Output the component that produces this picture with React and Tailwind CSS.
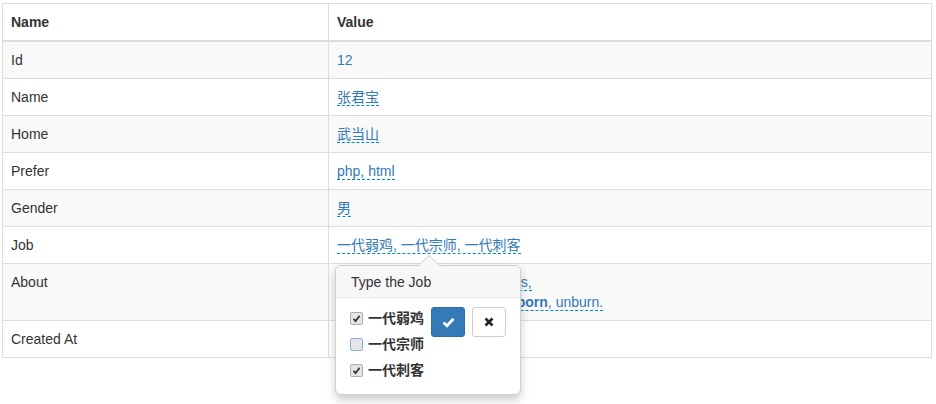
import React from 'react';

const font = { fontFamily: '"Liberation Sans", "Noto Sans CJK SC", Arial, sans-serif' };

const Editable = ({ children }) => (
    <a className="text-[#337ab7] border-b border-dashed border-[#0088cc] no-underline cursor-pointer">
        {children}
    </a>
);

const Check = ({ checked, focused }) => (
    <span
        className={`inline-flex items-center justify-center w-[13px] h-[13px] rounded-[2px] border ${
            focused ? 'border-[#7eb4ea] bg-[#e5e5e5]' : 'border-[#acacac] bg-[#e6e6e6]'
        }`}
    >
        {checked && (
            <svg width="9" height="9" viewBox="0 0 9 9">
                <path d="M1.5 4.8 L3.6 7 L7.6 1.8" fill="none" stroke="#333" strokeWidth="1.8" />
            </svg>
        )}
    </span>
);

const JobPopover = () => (
    <div className="absolute left-[-2px] top-[30px] z-10 w-[186px] rounded-[6px] border border-[#d0d0d0] bg-white shadow-[0_5px_10px_rgba(0,0,0,0.2)] text-left">
        <svg className="absolute -top-[11px] left-[81px]" width="24" height="12" viewBox="0 0 24 12">
            <path d="M0.5 11.5 L12 0.5 L23.5 11.5" fill="#f7f7f7" stroke="#cfcfcf" />
        </svg>
        <div className="h-[32px] rounded-t-[5px] bg-[#f7f7f7] border-b border-[#ebebeb] px-[15px] pt-[6px] text-[14px] leading-[20px] text-[#333]">
            Type the Job
        </div>
        <div className="flex items-start pl-[14px] pt-[7px] pb-[11px]">
            <div className="flex flex-col">
                {[
                    ['一代弱鸡', true, false],
                    ['一代宗师', false, true],
                    ['一代刺客', true, false],
                ].map(([label, checked, focused]) => (
                    <label key={label} className="flex items-center gap-[5px] h-[26px] font-bold text-[14px] text-[#333]">
                        <Check checked={checked} focused={focused} />
                        {label}
                    </label>
                ))}
            </div>
            <button className="ml-[7px] mt-[2px] w-[34px] h-[30px] rounded-[3px] bg-[#337ab7] border border-[#2e6da4] flex items-center justify-center">
                <svg width="13" height="11" viewBox="0 0 13 11">
                    <path d="M1.5 5.5 L5 8.8 L11.5 1.8" fill="none" stroke="#fff" strokeWidth="2.8" />
                </svg>
            </button>
            <button className="ml-[7px] mt-[2px] w-[34px] h-[30px] rounded-[3px] bg-white border border-[#ccc] flex items-center justify-center">
                <svg width="10" height="10" viewBox="0 0 10 10">
                    <path d="M1.5 1.5 L8.5 8.5 M8.5 1.5 L1.5 8.5" fill="none" stroke="#222" strokeWidth="2.6" />
                </svg>
            </button>
        </div>
    </div>
);

const rows = [
    ['Id', <span className="text-[#337ab7]">12</span>],
    ['Name', <Editable>张君宝</Editable>],
    ['Home', <Editable>武当山</Editable>],
    ['Prefer', <Editable>php, html</Editable>],
    ['Gender', <Editable>男</Editable>],
    [
        'Job',
        <span className="relative inline-block">
            <Editable>一代弱鸡, 一代宗师, 一代刺客</Editable>
            <JobPopover />
        </span>,
    ],
    [
        'About',
        <Editable>
            Nothing to say but only flowers,
            <br />
            Everything will be in <b>born, reborn</b>, unburn.
        </Editable>,
    ],
    ['Created At', <Editable>2015-04-13</Editable>],
];

export default function App() {
    return (
        <div className="bg-white w-[936px] h-[404px] pt-[3px] pl-[2px] text-[14px] leading-[20px] text-[#333]" style={font}>
            <table className="w-[930px] table-fixed border border-[#ddd]">
                <thead>
                    <tr>
                        <th className="w-[326px] border border-[#ddd] border-b-2 px-[8px] py-[8px] text-left font-bold">Name</th>
                        <th className="border border-[#ddd] border-b-2 px-[8px] py-[8px] text-left font-bold">Value</th>
                    </tr>
                </thead>
                <tbody>
                    {rows.map(([name, value], i) => (
                        <tr key={name} className={i % 2 === 0 ? 'bg-[#f9f9f9]' : 'bg-white'}>
                            <td className="border border-[#ddd] px-[8px] py-[8px] align-top">{name}</td>
                            <td className="border border-[#ddd] px-[8px] py-[8px] align-top">{value}</td>
                        </tr>
                    ))}
                </tbody>
            </table>
        </div>
    );
}
